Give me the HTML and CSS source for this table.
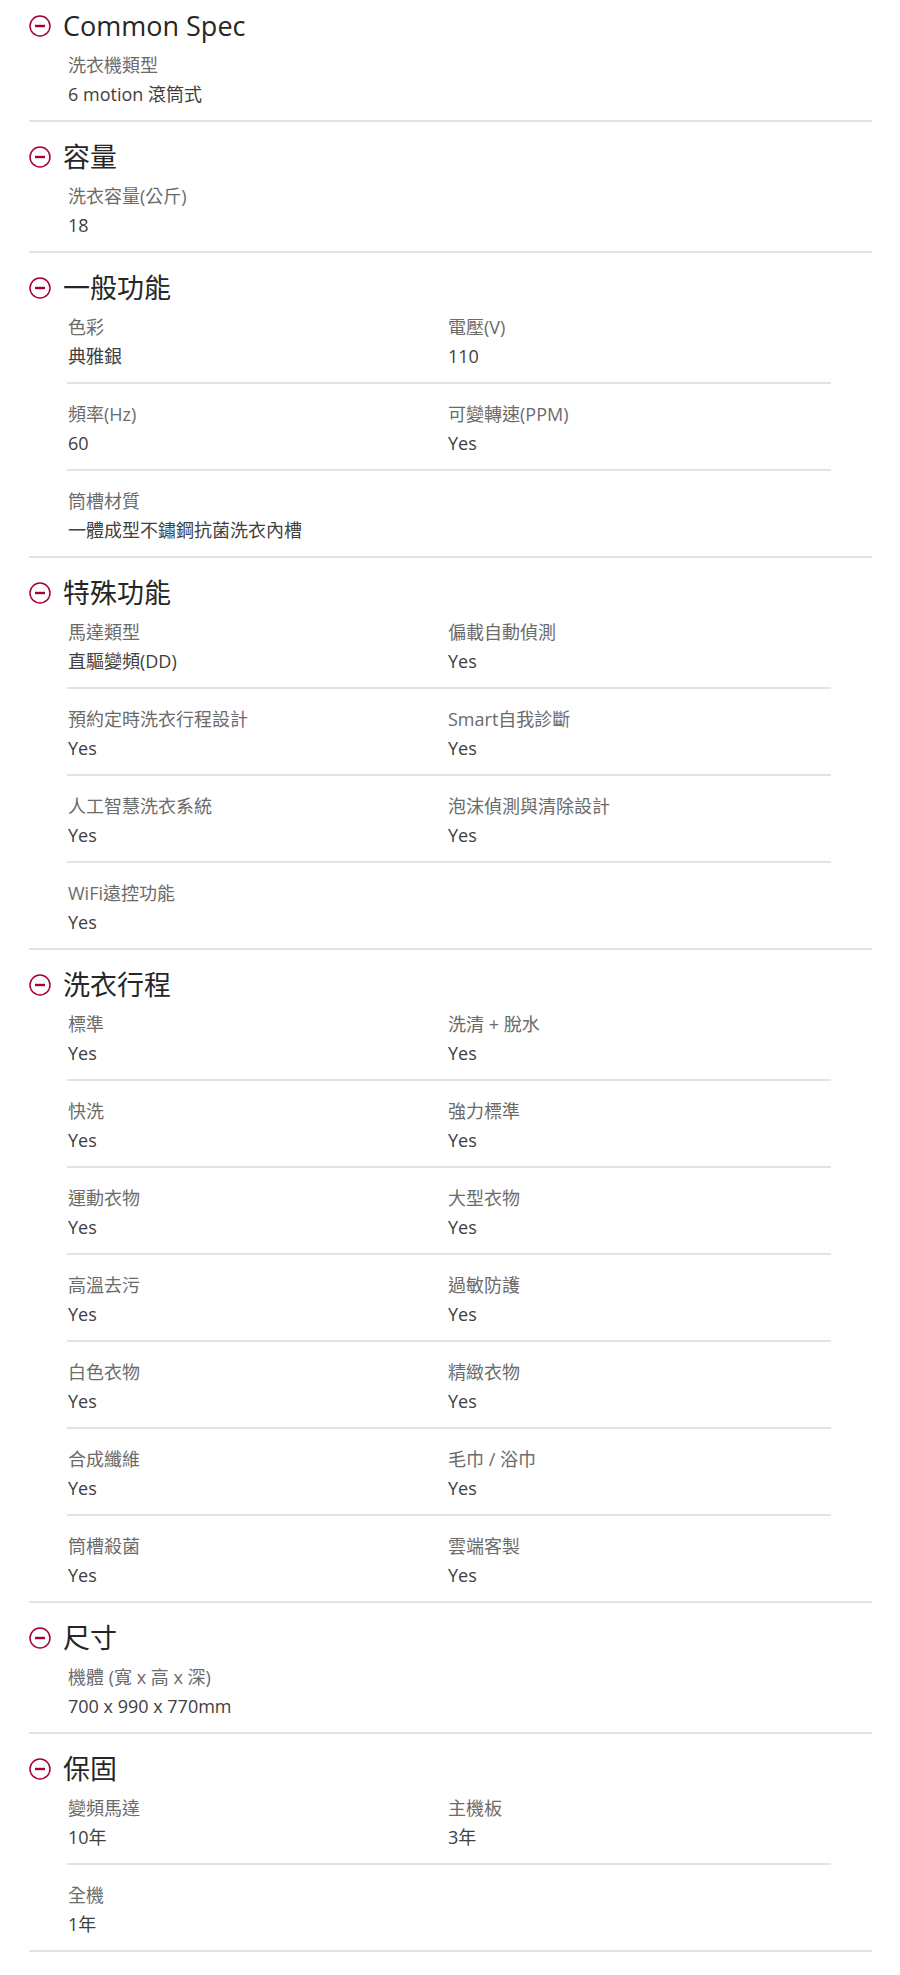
FILE: index.html
```html
<!DOCTYPE html>
<html>
<head>
  <meta charset="utf-8">
  <title>規格</title>
  <link rel="stylesheet" href="styles.css">
</head>
<body>
  <div class="spec">

    <section class="group">
      <h2 class="group-title"><svg class="toggle" viewBox="0 0 22 22"><circle cx="11" cy="11" r="10"/><line x1="6" y1="11" x2="16" y2="11"/></svg>Common Spec</h2>
      <div class="rows">
        <div class="row">
          <div class="item"><p class="label">洗衣機類型</p><p class="value">6 motion 滾筒式</p></div>
        </div>
      </div>
    </section>

    <section class="group">
      <h2 class="group-title"><svg class="toggle" viewBox="0 0 22 22"><circle cx="11" cy="11" r="10"/><line x1="6" y1="11" x2="16" y2="11"/></svg>容量</h2>
      <div class="rows">
        <div class="row">
          <div class="item"><p class="label">洗衣容量(公斤)</p><p class="value">18</p></div>
        </div>
      </div>
    </section>

    <section class="group">
      <h2 class="group-title"><svg class="toggle" viewBox="0 0 22 22"><circle cx="11" cy="11" r="10"/><line x1="6" y1="11" x2="16" y2="11"/></svg>一般功能</h2>
      <div class="rows">
        <div class="row">
          <div class="item"><p class="label">色彩</p><p class="value">典雅銀</p></div>
          <div class="item"><p class="label">電壓(V)</p><p class="value">110</p></div>
        </div>
        <div class="row">
          <div class="item"><p class="label">頻率(Hz)</p><p class="value">60</p></div>
          <div class="item"><p class="label">可變轉速(PPM)</p><p class="value">Yes</p></div>
        </div>
        <div class="row">
          <div class="item"><p class="label">筒槽材質</p><p class="value">一體成型不鏽鋼抗菌洗衣內槽</p></div>
        </div>
      </div>
    </section>

    <section class="group">
      <h2 class="group-title"><svg class="toggle" viewBox="0 0 22 22"><circle cx="11" cy="11" r="10"/><line x1="6" y1="11" x2="16" y2="11"/></svg>特殊功能</h2>
      <div class="rows">
        <div class="row">
          <div class="item"><p class="label">馬達類型</p><p class="value">直驅變頻(DD)</p></div>
          <div class="item"><p class="label">偏載自動偵測</p><p class="value">Yes</p></div>
        </div>
        <div class="row">
          <div class="item"><p class="label">預約定時洗衣行程設計</p><p class="value">Yes</p></div>
          <div class="item"><p class="label">Smart自我診斷</p><p class="value">Yes</p></div>
        </div>
        <div class="row">
          <div class="item"><p class="label">人工智慧洗衣系統</p><p class="value">Yes</p></div>
          <div class="item"><p class="label">泡沫偵測與清除設計</p><p class="value">Yes</p></div>
        </div>
        <div class="row">
          <div class="item"><p class="label">WiFi遠控功能</p><p class="value">Yes</p></div>
        </div>
      </div>
    </section>

    <section class="group">
      <h2 class="group-title"><svg class="toggle" viewBox="0 0 22 22"><circle cx="11" cy="11" r="10"/><line x1="6" y1="11" x2="16" y2="11"/></svg>洗衣行程</h2>
      <div class="rows">
        <div class="row">
          <div class="item"><p class="label">標準</p><p class="value">Yes</p></div>
          <div class="item"><p class="label">洗清 + 脫水</p><p class="value">Yes</p></div>
        </div>
        <div class="row">
          <div class="item"><p class="label">快洗</p><p class="value">Yes</p></div>
          <div class="item"><p class="label">強力標準</p><p class="value">Yes</p></div>
        </div>
        <div class="row">
          <div class="item"><p class="label">運動衣物</p><p class="value">Yes</p></div>
          <div class="item"><p class="label">大型衣物</p><p class="value">Yes</p></div>
        </div>
        <div class="row">
          <div class="item"><p class="label">高溫去污</p><p class="value">Yes</p></div>
          <div class="item"><p class="label">過敏防護</p><p class="value">Yes</p></div>
        </div>
        <div class="row">
          <div class="item"><p class="label">白色衣物</p><p class="value">Yes</p></div>
          <div class="item"><p class="label">精緻衣物</p><p class="value">Yes</p></div>
        </div>
        <div class="row">
          <div class="item"><p class="label">合成纖維</p><p class="value">Yes</p></div>
          <div class="item"><p class="label">毛巾 / 浴巾</p><p class="value">Yes</p></div>
        </div>
        <div class="row">
          <div class="item"><p class="label">筒槽殺菌</p><p class="value">Yes</p></div>
          <div class="item"><p class="label">雲端客製</p><p class="value">Yes</p></div>
        </div>
      </div>
    </section>

    <section class="group">
      <h2 class="group-title"><svg class="toggle" viewBox="0 0 22 22"><circle cx="11" cy="11" r="10"/><line x1="6" y1="11" x2="16" y2="11"/></svg>尺寸</h2>
      <div class="rows">
        <div class="row">
          <div class="item"><p class="label">機體 (寬 x 高 x 深)</p><p class="value">700 x 990 x 770mm</p></div>
        </div>
      </div>
    </section>

    <section class="group">
      <h2 class="group-title"><svg class="toggle" viewBox="0 0 22 22"><circle cx="11" cy="11" r="10"/><line x1="6" y1="11" x2="16" y2="11"/></svg>保固</h2>
      <div class="rows">
        <div class="row">
          <div class="item"><p class="label">變頻馬達</p><p class="value">10年</p></div>
          <div class="item"><p class="label">主機板</p><p class="value">3年</p></div>
        </div>
        <div class="row">
          <div class="item"><p class="label">全機</p><p class="value">1年</p></div>
        </div>
      </div>
    </section>

  </div>
</body>
</html>
```

FILE: styles.css
```css
body {
  margin: 0;
  padding: 0;
  background: #fff;
  font-family: "Open Sans", "Noto Sans CJK TC", sans-serif;
}

.spec {
  margin: 0 28px 0 29px;
}

/* one block per spec group */
.group {
  padding-top: 19px;
  border-bottom: 2px solid #e3e3e3;
}
.group:first-child {
  padding-top: 10px;
}

.group-title {
  display: flex;
  align-items: center;
  gap: 12px;
  margin: 0;
  font-size: 27px;
  line-height: 32px;
  font-weight: normal;
  color: #262626;
}

.toggle {
  width: 22px;
  height: 22px;
  flex: none;
}
.toggle circle {
  fill: none;
  stroke: #a50034;
  stroke-width: 1.5;
}
.toggle line {
  stroke: #a50034;
  stroke-width: 2.4;
}

.rows {
  margin: 0 41px 0 38px;
}

.row {
  display: grid;
  grid-template-columns: 380px 1fr;
  padding: 16px 0 11px;
  border-bottom: 2px solid #e3e3e3;
}
.row:first-child {
  padding-top: 9px;
}
.row:last-child {
  border-bottom: none;
}

.item {
  padding-left: 1px;
}

.label,
.value {
  margin: 0;
  font-size: 18px;
  line-height: 29px;
}
.label {
  color: #6b6b6b;
}
.value {
  color: #404040;
}
```
